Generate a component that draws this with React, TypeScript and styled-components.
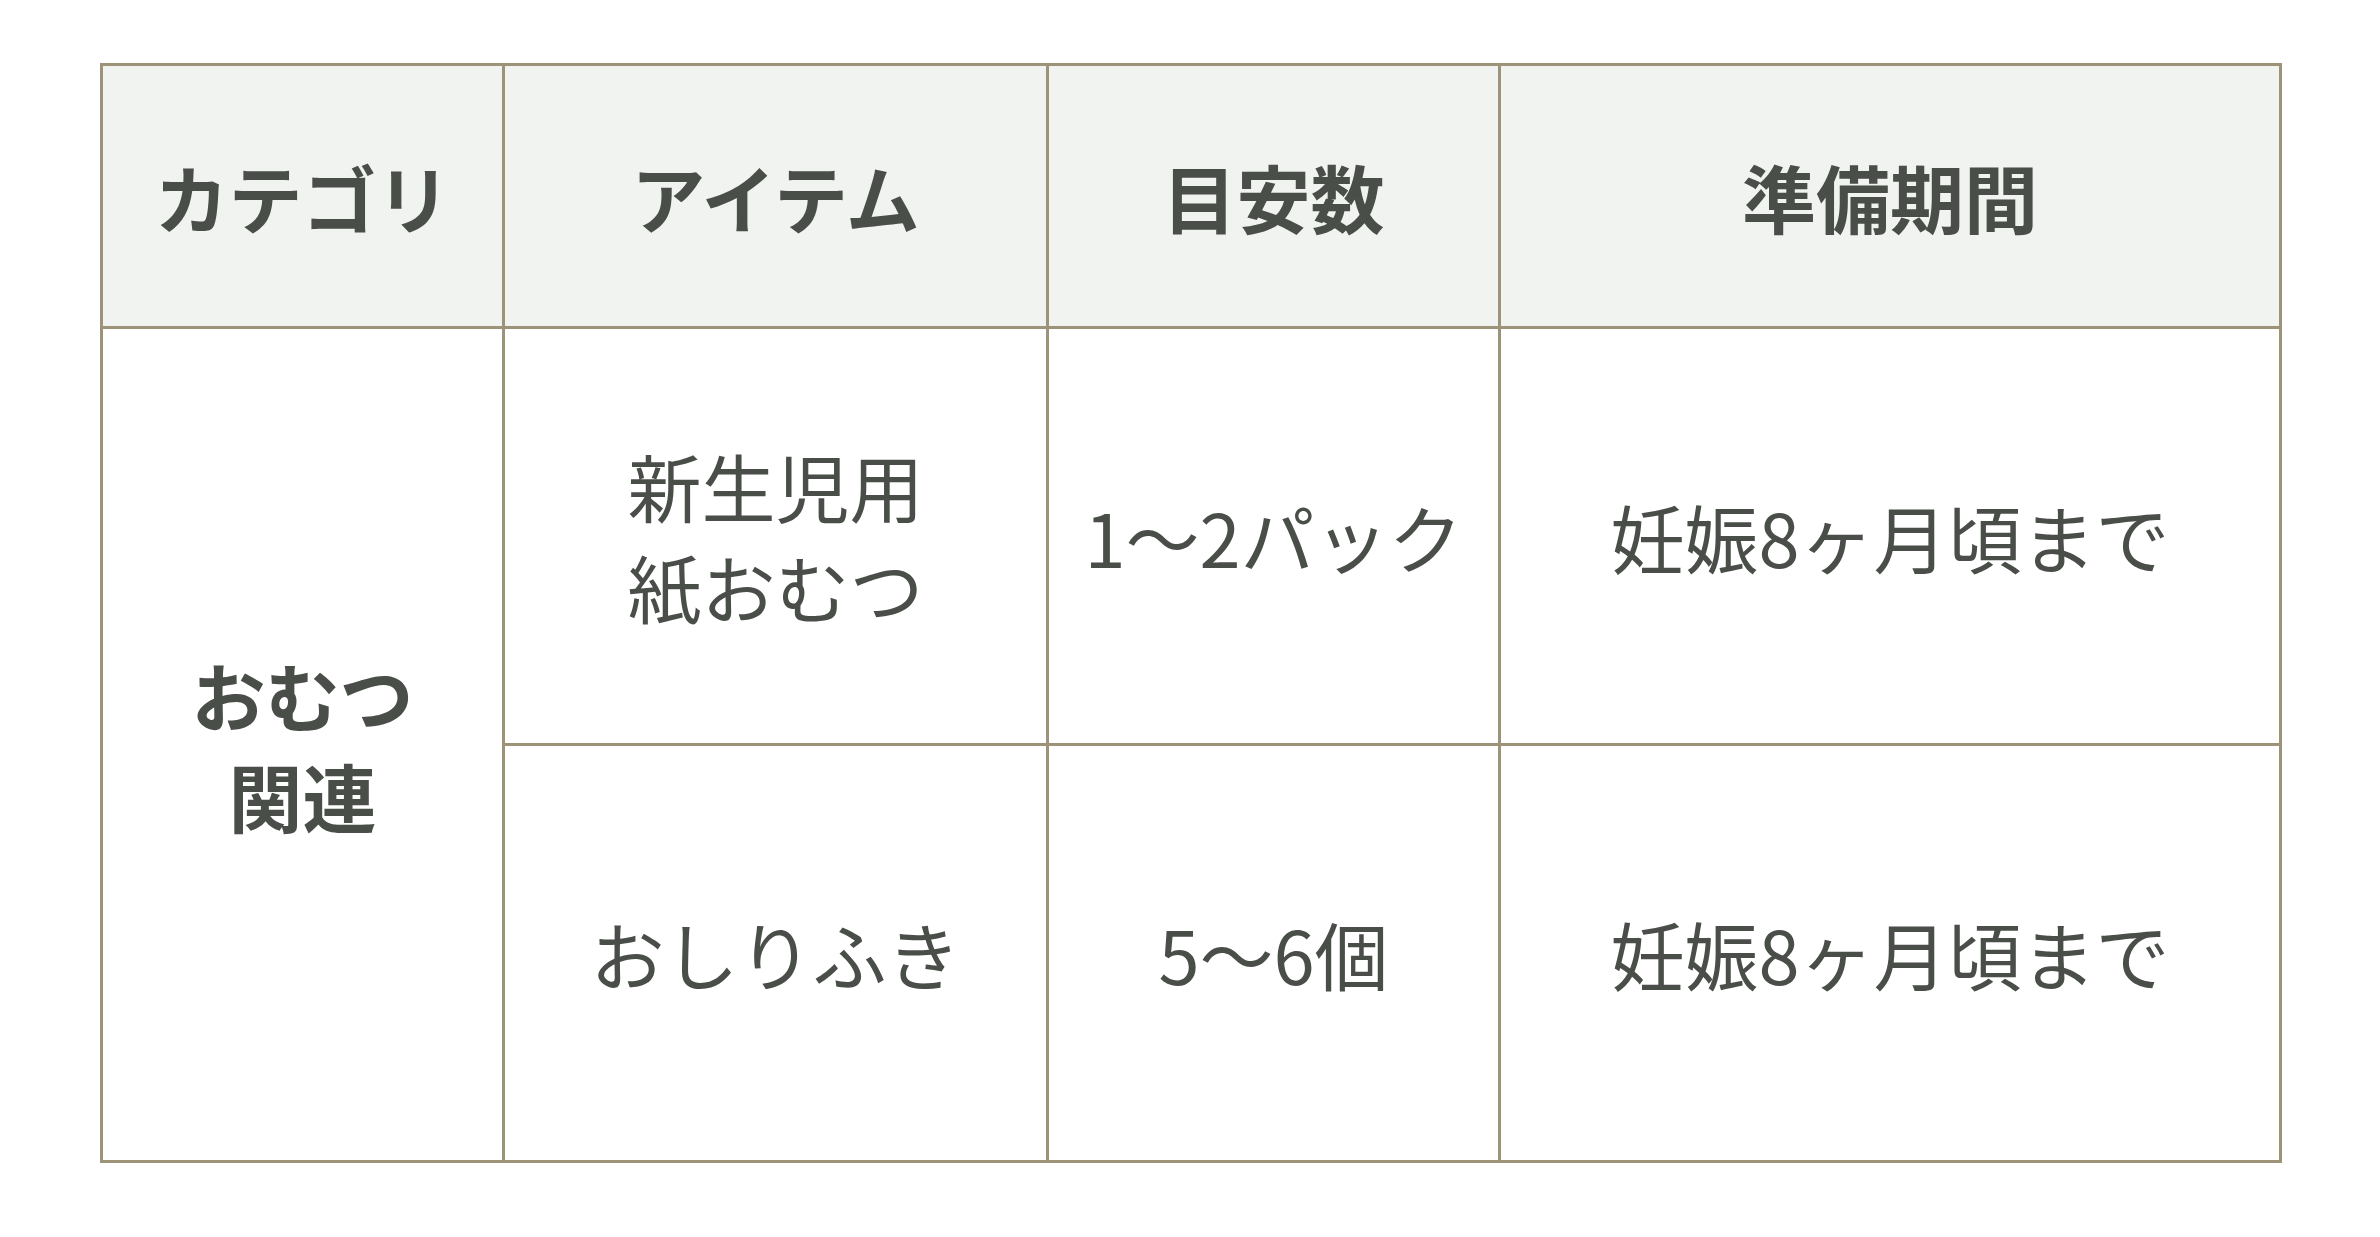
import React from "react";
import styled, { createGlobalStyle } from "styled-components";

const Global = createGlobalStyle`
  html, body { margin: 0; padding: 0; background: #ffffff; }
  body { font-family: "Noto Sans CJK JP", "Noto Sans", sans-serif; color: #4a4e49; }
`;

const Page = styled.div`
  width: 2380px;
  height: 1237px;
  box-sizing: border-box;
  padding: 63px 0 0 100px;
`;

const Table = styled.table`
  border-collapse: collapse;
  table-layout: fixed;
  width: 2179px;
`;

const Col = styled.col<{ $w: number }>`
  width: ${(p) => p.$w}px;
`;

const Head = styled.th`
  height: 260px;
  padding: 0;
  background: #f1f3f0;
  border: 3px solid #9c9379;
  font-size: 74px;
  font-weight: 700;
  line-height: 1.36;
  text-align: center;
  vertical-align: middle;
`;

const Cell = styled.td<{ $bold?: boolean }>`
  height: 414px;
  padding: 0;
  border: 3px solid #9c9379;
  font-size: 74px;
  font-weight: ${(p) => (p.$bold ? 700 : 400)};
  line-height: 1.36;
  text-align: center;
  vertical-align: middle;
`;

const Line = styled.span`
  display: block;
`;

export default function App() {
  return (
    <>
      <Global />
      <Page>
        <Table>
          <colgroup>
            <Col $w={402} />
            <Col $w={544} />
            <Col $w={452} />
            <Col $w={781} />
          </colgroup>
          <thead>
            <tr>
              <Head>カテゴリ</Head>
              <Head>アイテム</Head>
              <Head>目安数</Head>
              <Head>準備期間</Head>
            </tr>
          </thead>
          <tbody>
            <tr>
              <Cell $bold rowSpan={2}>
                <Line>おむつ</Line>
                <Line>関連</Line>
              </Cell>
              <Cell>
                <Line>新生児用</Line>
                <Line>紙おむつ</Line>
              </Cell>
              <Cell>1〜2パック</Cell>
              <Cell>妊娠8ヶ月頃まで</Cell>
            </tr>
            <tr>
              <Cell>おしりふき</Cell>
              <Cell>5〜6個</Cell>
              <Cell>妊娠8ヶ月頃まで</Cell>
            </tr>
          </tbody>
        </Table>
      </Page>
    </>
  );
}
